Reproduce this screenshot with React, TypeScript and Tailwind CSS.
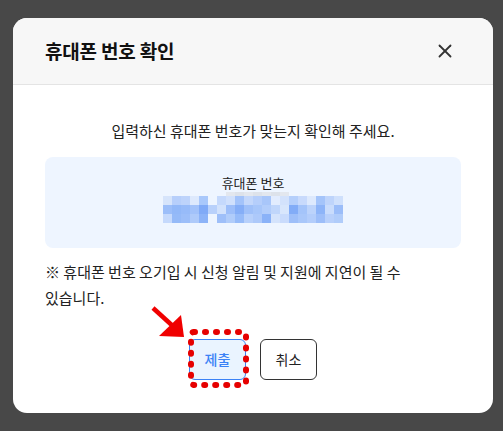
import { X } from "lucide-react";

const rows: string[][] = [
  ["#d6e4fb", "#b7cffb", "#bdd3fb", "#dde9fd", "#a9c8fb", "#eef5ff", "#c5d9fc", "#d0e0fc", "#a3c3fa", "#c3d7fb", "#b5cefb", "#a8c6fa", "#e2ecfe", "#d3e2fc", "#b5cffb", "#c8dafc", "#dde9fd", "#a4c4fa", "#bed4fb", "#cfe0fc"],
  ["#9cbef9", "#92b8f8", "#97bbf9", "#a2c2fa", "#80aaf7", "#b9d1fb", "#d2e2fc", "#9dbef9", "#85aef7", "#9fc0f9", "#a7c6fa", "#b2cdfb", "#c0d6fb", "#d8e6fc", "#82acf7", "#a4c4fa", "#bcd3fb", "#8db4f8", "#c9dcfc", "#9bbdf9"],
  ["#c5d9fc", "#95baf8", "#9cbef9", "#aecafa", "#8cb3f8", "#eef5ff", "#9ebff9", "#b0ccfa", "#96bbf9", "#b7d0fb", "#adc9fa", "#8ab2f8", "#d4e3fc", "#c9dbfc", "#9ebff9", "#a9c7fa", "#b3cdfb", "#9dbef9", "#b8d0fb", "#b0ccfa"],
];

function Mosaic() {
  return (
    <svg width="180" height="31" viewBox="0 0 180 31">
      {[7, 8, 9, 10, 11, 12, 13].map((c) => (
        <rect key={c} x={c * 9} y={0} width={9} height={4} fill={c % 2 ? "#e3e7ee" : "#dde2ea"} />
      ))}
      {rows.map((row, r) =>
        row.map((color, c) => (
          <rect key={`${r}-${c}`} x={c * 9} y={4 + r * 9} width={9} height={9} fill={color} />
        ))
      )}
    </svg>
  );
}

export default function App() {
  return (
    <div
      className="w-[503px] h-[431px] bg-[#484848] pt-[18px] pl-[13px] overflow-hidden"
      style={{ fontFamily: '"Noto Sans CJK KR", "Noto Sans", sans-serif' }}
    >
      <div className="w-[480px] bg-white rounded-[14px] overflow-hidden">
        <div className="h-[67px] bg-[#f7f7f7] border-b border-[#e4e4e4] flex items-center justify-between pl-[32px] pr-[37px]">
          <h1 className="text-[19px] font-bold text-[#111] tracking-[-0.2px]">휴대폰 번호 확인</h1>
          <X className="w-[22px] h-[22px] text-[#333]" strokeWidth={2} />
        </div>

        <div className="px-8 pt-[35px] pb-[33px]">
          <p className="text-[15px] leading-[22px] text-center text-[#222]">
            입력하신 휴대폰 번호가 맞는지 확인해 주세요.
          </p>

          <div className="mt-[15px] h-[91px] bg-[#eef5ff] rounded-[8px] flex flex-col items-center pt-[17px]">
            <span className="text-[13px] leading-[18px] text-[#222]">휴대폰 번호</span>
            <Mosaic />
          </div>

          <p className="mt-[11px] text-[15px] leading-[26px] text-[#222] break-keep">
            ※ 휴대폰 번호 오기입 시 신청 알림 및 지원에 지연이 될 수 있습니다.
          </p>

          <div className="mt-[28px] flex justify-center gap-[14px]">
            <div className="relative">
              <button className="w-[57px] h-[41px] rounded-[6px] border border-[#3b82f6] bg-[#eaf4ff] text-[14px] font-medium text-[#3b82f6]">
                제출
              </button>
              <svg
                className="absolute left-[-1px] top-[-10px]"
                width="62"
                height="60"
                viewBox="0 0 62 60"
              >
                <rect
                  x="3"
                  y="3"
                  width="55"
                  height="53"
                  rx="3"
                  fill="none"
                  stroke="#e60000"
                  strokeWidth="6"
                  strokeDasharray="1 10"
                  strokeLinecap="round"
                />
              </svg>
              <svg
                className="absolute left-[-38px] top-[-33px]"
                width="36"
                height="34"
                viewBox="0 0 36 34"
              >
                <line x1="2" y1="2" x2="24" y2="22" stroke="#f00000" strokeWidth="4.5" />
                <polygon points="8,30 33,31 30,9" fill="#f00000" />
              </svg>
            </div>
            <button className="w-[57px] h-[41px] rounded-[6px] border border-[#333] bg-white text-[14px] text-[#222]">
              취소
            </button>
          </div>
        </div>
      </div>
    </div>
  );
}
